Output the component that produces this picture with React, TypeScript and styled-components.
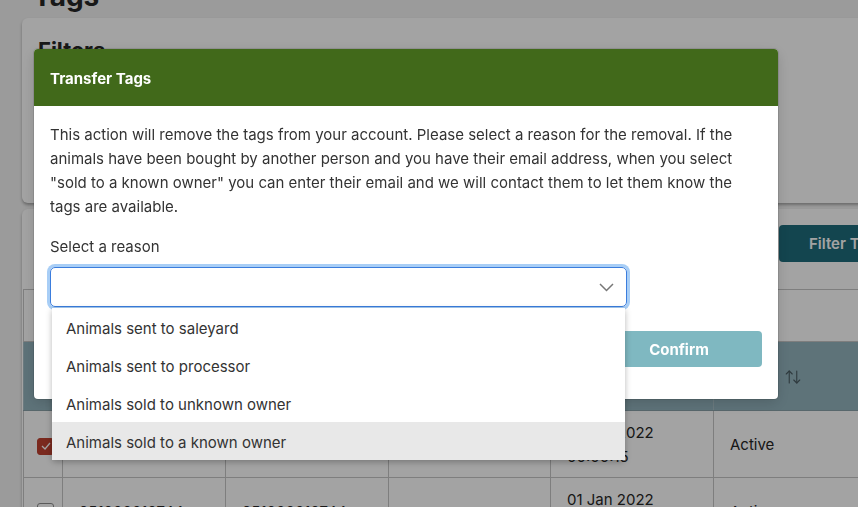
import { createGlobalStyle, styled } from "styled-components";
import { ArrowUpDown } from "lucide-react";

const GlobalStyle = createGlobalStyle`
    html, body {
        margin: 0;
        padding: 0;
    }
    body {
        width: 858px;
        height: 507px;
        overflow: hidden;
        background: #f2f2f2;
        color: #262626;
        font-family: Inter, "Noto Sans", sans-serif;
    }
    * {
        box-sizing: border-box;
    }
`

const Page = styled.div`
    width: 960px;
    padding-left: 22px;
`

const Title = styled.h1`
    margin: -20px 0 6px 11px;
    font-size: 28px;
    line-height: 32px;
    font-weight: 700;
`

const Card = styled.section`
    width: 913px;
    background: #fff;
    border-radius: 6px;
    box-shadow: 0 2px 3px rgba(0, 0, 0, 0.3);
    margin-bottom: 6px;
`

const FilterCard = styled(Card)`
    height: 185px;
    padding: 19px 16px;
`

const CardTitle = styled.h2`
    margin: 0;
    font-size: 22px;
    line-height: 26px;
    font-weight: 700;
`

const Toolbar = styled.div`
    display: flex;
    justify-content: flex-end;
    padding: 16px 0 27px;
`

const FilterButton = styled.button`
    width: 156px;
    height: 37px;
    border: 0;
    border-radius: 4px 0 0 4px;
    background: #1e6c7c;
    color: #fff;
    font-family: inherit;
    font-size: 15px;
    font-weight: 600;
    text-align: left;
    padding-left: 30px;
`

const Table = styled.table`
    width: 912px;
    margin-left: 1px;
    border-collapse: collapse;
    table-layout: fixed;
    font-size: 15px;
`

const Cell = styled.td`
    border: 1px solid #c6c6c6;
    padding: 1px 16px 0;
    line-height: 24px;
    vertical-align: middle;
`

const TopCell = styled.td`
    height: 52px;
    border: 1px solid #c6c6c6;
`

const HeadCell = styled.th`
    height: 69px;
    border: 1px solid #a9c1c8;
    border-bottom-color: #8aa2a9;
    background: #93b4be;
    padding: 6px 0 0 70px;
    text-align: left;
    color: #4a5c62;
`

const Row = styled.tr<{ $height: number }>`
    height: ${(p) => p.$height}px;
`

const Check = styled.span<{ $checked?: boolean }>`
    display: inline-flex;
    align-items: center;
    justify-content: center;
    width: 17px;
    height: 17px;
    margin: 6px 0 0 -3px;
    border-radius: 3px;
    border: 1px solid ${(p) => (p.$checked ? "#bf4030" : "#8e8e8e")};
    background: ${(p) => (p.$checked ? "#bf4030" : "#fff")};
`

const Overlay = styled.div`
    position: fixed;
    inset: 0;
    background: rgba(0, 0, 0, 0.36);
`

const Modal = styled.div`
    position: absolute;
    top: 49px;
    left: 34px;
    width: 744px;
    background: #fff;
    border-radius: 4px;
    box-shadow: 0 0 0 1px rgba(0, 0, 0, 0.1), 0 4px 14px rgba(0, 0, 0, 0.15);
`

const ModalHeader = styled.header`
    height: 57px;
    display: flex;
    align-items: center;
    padding: 1px 16px 0;
    background: #41691a;
    border-radius: 4px 4px 0 0;
    color: #fff;
    font-size: 15px;
    font-weight: 700;
`

const ModalBody = styled.div`
    padding: 17px 16px 32px;
    font-size: 15px;
    line-height: 24px;
    color: #333;
`

const Lead = styled.p`
    margin: 0 0 16px;
`

const Label = styled.label`
    display: block;
    margin-bottom: 8px;
`

const SelectWrap = styled.div`
    position: relative;
    width: 577px;
`

const SelectBox = styled.div`
    height: 40px;
    display: flex;
    align-items: center;
    justify-content: flex-end;
    padding-right: 12px;
    border: 1px solid #3b7ddd;
    border-radius: 5px;
    box-shadow: 0 0 0 3px #a8cef6;
`

const Options = styled.ul`
    position: absolute;
    top: 41px;
    left: 2px;
    width: 573px;
    margin: 0;
    padding: 0;
    list-style: none;
    background: #fff;
    border-radius: 0 0 4px 4px;
    box-shadow: 0 2px 6px rgba(0, 0, 0, 0.28);
    z-index: 2;
`

const Option = styled.li<{ $active?: boolean }>`
    height: 38px;
    display: flex;
    align-items: center;
    padding: 3px 0 0 14px;
    background: ${(p) => (p.$active ? "#e8e8e8" : "#fff")};
    color: #333;
`

const Actions = styled.div`
    display: flex;
    justify-content: flex-end;
    gap: 16px;
    margin-top: 24px;
`

const ActionButton = styled.button<{ $primary?: boolean }>`
    width: 166px;
    height: 36px;
    border-radius: 4px;
    border: ${(p) => (p.$primary ? "0" : "1px solid #7fb8c1")};
    background: ${(p) => (p.$primary ? "#7fb8c1" : "#fff")};
    color: ${(p) => (p.$primary ? "#fff" : "#7fb8c1")};
    font-family: inherit;
    font-size: 15px;
    font-weight: 700;
`

const reasons = [
    "Animals sent to saleyard",
    "Animals sent to processor",
    "Animals sold to unknown owner",
    "Animals sold to a known owner",
]

export default function App() {
    return (
        <>
            <GlobalStyle />
            <Page>
                <Title>Tags</Title>
                <FilterCard>
                    <CardTitle>Filters</CardTitle>
                </FilterCard>
                <Card>
                    <Toolbar>
                        <FilterButton>Filter Tags</FilterButton>
                    </Toolbar>
                    <Table>
                        <colgroup>
                            <col style={{ width: 39 }} />
                            <col style={{ width: 163 }} />
                            <col style={{ width: 163 }} />
                            <col style={{ width: 162 }} />
                            <col style={{ width: 163 }} />
                            <col />
                        </colgroup>
                        <tbody>
                            <tr>
                                <TopCell colSpan={6} />
                            </tr>
                            <tr>
                                <HeadCell />
                                <HeadCell><ArrowUpDown size={18} strokeWidth={1.5} /></HeadCell>
                                <HeadCell><ArrowUpDown size={18} strokeWidth={1.5} /></HeadCell>
                                <HeadCell><ArrowUpDown size={18} strokeWidth={1.5} /></HeadCell>
                                <HeadCell><ArrowUpDown size={18} strokeWidth={1.5} /></HeadCell>
                                <HeadCell><ArrowUpDown size={18} strokeWidth={1.5} /></HeadCell>
                            </tr>
                            <Row $height={67}>
                                <Cell>
                                    <Check $checked>
                                        <svg width="10" height="8" viewBox="0 0 10 8">
                                            <path d="M1 4l3 3 5-6" fill="none" stroke="#fff" strokeWidth="1.3" />
                                        </svg>
                                    </Check>
                                </Cell>
                                <Cell>951000012745</Cell>
                                <Cell>951000012745</Cell>
                                <Cell />
                                <Cell>01 Jan 2022<br />00:00:15</Cell>
                                <Cell>Active</Cell>
                            </Row>
                            <Row $height={67}>
                                <Cell><Check /></Cell>
                                <Cell>951000012744</Cell>
                                <Cell>951000012744</Cell>
                                <Cell />
                                <Cell>01 Jan 2022<br />00:00:15</Cell>
                                <Cell>Active</Cell>
                            </Row>
                        </tbody>
                    </Table>
                </Card>
            </Page>
            <Overlay>
                <Modal>
                    <ModalHeader>Transfer Tags</ModalHeader>
                    <ModalBody>
                        <Lead>
                            This action will remove the tags from your account. Please select a reason for the removal. If the
                            animals have been bought by another person and you have their email address, when you select
                            "sold to a known owner" you can enter their email and we will contact them to let them know the
                            tags are available.
                        </Lead>
                        <Label>Select a reason</Label>
                        <SelectWrap>
                            <SelectBox>
                                <svg width="15" height="9" viewBox="0 0 15 9">
                                    <path d="M1 1l6.5 6.5L14 1" fill="none" stroke="#777" strokeWidth="1.5" />
                                </svg>
                            </SelectBox>
                            <Options>
                                {reasons.map((r, i) => (
                                    <Option key={r} $active={i === reasons.length - 1}>{r}</Option>
                                ))}
                            </Options>
                        </SelectWrap>
                        <Actions>
                            <ActionButton>Cancel</ActionButton>
                            <ActionButton $primary>Confirm</ActionButton>
                        </Actions>
                    </ModalBody>
                </Modal>
            </Overlay>
        </>
    )
}
